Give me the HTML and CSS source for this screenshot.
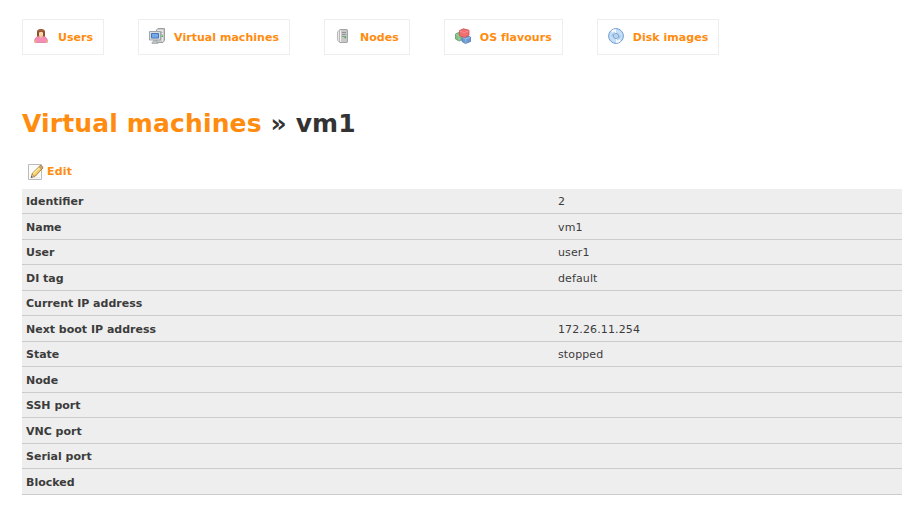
FILE: index.html
```html
<!DOCTYPE html>
<html lang="en">
<head>
<meta charset="utf-8">
<title>Virtual machines » vm1</title>
<link rel="stylesheet" href="styles.css">
</head>
<body>
<nav class="menu">
  <a class="menu-item">
    <svg class="icon" viewBox="0 0 16 16">
      <path d="M4 9.500V4Q4 1 8 1t4 3v5.500z" fill="#8f4f2c"/>
      <path d="M5.500 3Q8 1 10.500 3" fill="none" stroke="#b06a42"/>
      <path d="M6 4.500q2-1.500 4 0v3q-2 2.500-4 0z" fill="#f8d9ae"/>
      <path d="M1.500 14q-.3-4 3-5.500h7q3.300 1.500 3 5.500-1 .8-2 .5h-9q-1 .3-2-.5z" fill="#f58cb4" stroke="#d96f9b" stroke-width=".7"/>
      <path d="M6.300 7.500h3.400v1.300L8 10.300 6.300 8.800z" fill="#efc08d"/>
      <path d="M1.200 12.300h2v1.900h-2zM12.800 12.300h2v1.900h-2z" fill="#e8b584"/>
    </svg>
    <span>Users</span>
  </a>
  <a class="menu-item">
    <svg class="icon" viewBox="0 0 16 16">
      <path d="M7.500 2 9 .5h6.500v12l-1.500 2H7.500z" fill="#c9cccb" stroke="#9a9e9d"/>
      <path d="M8 2.500h5.500v11" fill="none" stroke="#e8e8e8"/>
      <path d="M10 4.500h3.500M10 6.500h3.500" stroke="#a2a6a5" stroke-width=".8"/>
      <path d="M12.500 7.500H14V9h-1.500z" fill="#35b936"/>
      <path d="M.5 3.500h11v8.500H.5z" fill="#d9dddf" stroke="#a0a5a9"/>
      <path d="M2.500 5.500h7v4.500h-7z" fill="#76a9e8" stroke="#4676bd"/>
      <path d="M4.500 12.500h3V14H9v1.500H3V14h1.500z" fill="#bfc3c5" stroke="#a0a5a9" stroke-width=".7"/>
    </svg>
    <span>Virtual machines</span>
  </a>
  <a class="menu-item">
    <svg class="icon" viewBox="0 0 16 16">
      <path d="M2.500 4 5 1.500v13L2.500 12.500z" fill="#e8e8e8" stroke="#bbb"/>
      <path d="M5 1.500h7l.5.500v12l-.5.500H5z" fill="#c8c8c8" stroke="#a3a3a3"/>
      <path d="M5.500 2v12" stroke="#f2f2f2"/>
      <path d="M7 4.500h4M7 6.500h4M7 8.500h2.500" stroke="#929292"/>
      <path d="M9.500 8.200h1.500v2H9.500z" fill="#3fae3d"/>
    </svg>
    <span>Nodes</span>
  </a>
  <a class="menu-item">
    <svg class="icon" viewBox="0 0 16 16">
      <path d="m.5 6 3-1.500L8 6v5.500L4 13 .5 11z" fill="#83bd86" stroke="#619a69" stroke-width=".8"/>
      <path d="m1 6.500 3 1.200L7.500 6M4 8v4.500" fill="none" stroke="#a5d6a3" stroke-width=".8"/>
      <path d="m7 9 4-1.500L15.500 9v4.500L10.500 15.500 7 13.500z" fill="#6c99cf" stroke="#4e7ab5" stroke-width=".8"/>
      <path d="m7.500 9.500 3.300 1.300L15 9.500M10.800 11v4" fill="none" stroke="#a3c7ee" stroke-width=".8"/>
      <path d="m4.500 2.500 4-1.700 5.500 1.400v5L9.500 9.500l-5-1.700z" fill="#f07072" stroke="#d64d55" stroke-width=".8"/>
      <path d="m5 3.200 4.300 1.300 4.200-1.700" fill="none" stroke="#f99a98" stroke-width=".8"/>
      <ellipse cx="9" cy="2.500" rx="1.500" ry=".8" fill="#f7999a" stroke="#d64d55" stroke-width=".5"/>
    </svg>
    <span>OS flavours</span>
  </a>
  <a class="menu-item">
    <svg class="icon" viewBox="0 0 16 16">
      <circle cx="8" cy="8" r="7.400" fill="#c5dff6" stroke="#6f9bd0"/>
      <path d="M8 8 3 3q2-2 5-2zM8 8l5 5q-2 2-5 2z" fill="#f3f9ff"/>
      <path d="M3.800 8.500Q4 5 7 4M12.200 7.500Q12 11 9 12" fill="none" stroke="#8bb6e4" stroke-width=".8"/>
      <circle cx="8" cy="8" r="2.500" fill="#e1efff" stroke="#5f8fc9" stroke-width=".9"/>
      <circle cx="8" cy="8" r="1" fill="#fff" stroke="#6c97c8" stroke-width=".5"/>
    </svg>
    <span>Disk images</span>
  </a>
</nav>
<h1><a>Virtual machines</a> » vm1</h1>
<a class="edit">
  <svg class="icon" viewBox="0 0 16 16">
    <path d="M.5.500h13v15H.5z" fill="#fbfbfb" stroke="#bbb"/>
    <path d="M2 13.800h10" stroke="#e3e6ea"/>
    <path d="m3.500 13.200.9-4L11.800 2q1-.8 2.200.3t.2 2.300L7.500 12z" fill="#f4cf68" stroke="#9e7b32" stroke-width=".9"/>
    <path d="m5.300 9.700 7-6.800" stroke="#fff0a8" stroke-width="1.200"/>
    <path d="m11 2.800 2.800 2.600L15 4.200Q14.800 2 12.500 1.300z" fill="#d7a36b" stroke="#8c7550" stroke-width=".5"/>
    <path d="m3.200 13.500.8-3.200 2.500 2.200z" fill="#efdcb8" stroke="#8c6c3c" stroke-width=".5"/>
    <path d="m3 13.700.5-1.700 1.200 1.100z" fill="#333"/>
  </svg>
  <span>Edit</span>
</a>
<dl class="details">
  <div class="row"><dt>Identifier</dt><dd>2</dd></div>
  <div class="row"><dt>Name</dt><dd>vm1</dd></div>
  <div class="row"><dt>User</dt><dd>user1</dd></div>
  <div class="row"><dt>DI tag</dt><dd>default</dd></div>
  <div class="row"><dt>Current IP address</dt><dd></dd></div>
  <div class="row"><dt>Next boot IP address</dt><dd>172.26.11.254</dd></div>
  <div class="row"><dt>State</dt><dd>stopped</dd></div>
  <div class="row"><dt>Node</dt><dd></dd></div>
  <div class="row"><dt>SSH port</dt><dd></dd></div>
  <div class="row"><dt>VNC port</dt><dd></dd></div>
  <div class="row"><dt>Serial port</dt><dd></dd></div>
  <div class="row"><dt>Blocked</dt><dd></dd></div>
</dl>
</body>
</html>
```
FILE: styles.css
```css
body {
  margin: 0;
  padding: 19px 20px 0 22px;
  background: #fff;
  color: #333;
  font: 11px/16.5px "DejaVu Sans", sans-serif;
}

a {
  color: #ff8c0f;
  font-weight: bold;
}

.menu {
  display: flex;
  gap: 34px;
}

.menu-item {
  display: flex;
  box-sizing: border-box;
  height: 36px;
  padding: 8px 10px 0;
  border: 1px solid #eee;
  gap: 9px;
  white-space: nowrap;
  letter-spacing: 0.03px;
}

.menu-item span {
  padding-top: 2px;
}

.icon {
  display: block;
  flex: none;
  width: 16px;
  height: 16px;
}

h1 {
  margin: 50px 0 0;
  font-size: 25px;
  line-height: 37px;
  letter-spacing: 0.14px;
}

.edit {
  display: flex;
  height: 16px;
  margin-top: 22px;
  padding-left: 6px;
  gap: 3px;
  letter-spacing: 0.2px;
}

.details {
  margin: 8.5px 0 0;
  color: #3c3c3c;
}

.row {
  display: grid;
  grid-template-columns: 532px 1fr;
  box-sizing: border-box;
  height: 25.5px;
  border-bottom: 1px solid #ccc;
  background: #eee;
}

dt,
dd {
  margin: 0;
  padding: 5.6px 4px 2.4px;
}

dt {
  font-weight: bold;
}

dd {
  letter-spacing: 0.12px;
}
```
